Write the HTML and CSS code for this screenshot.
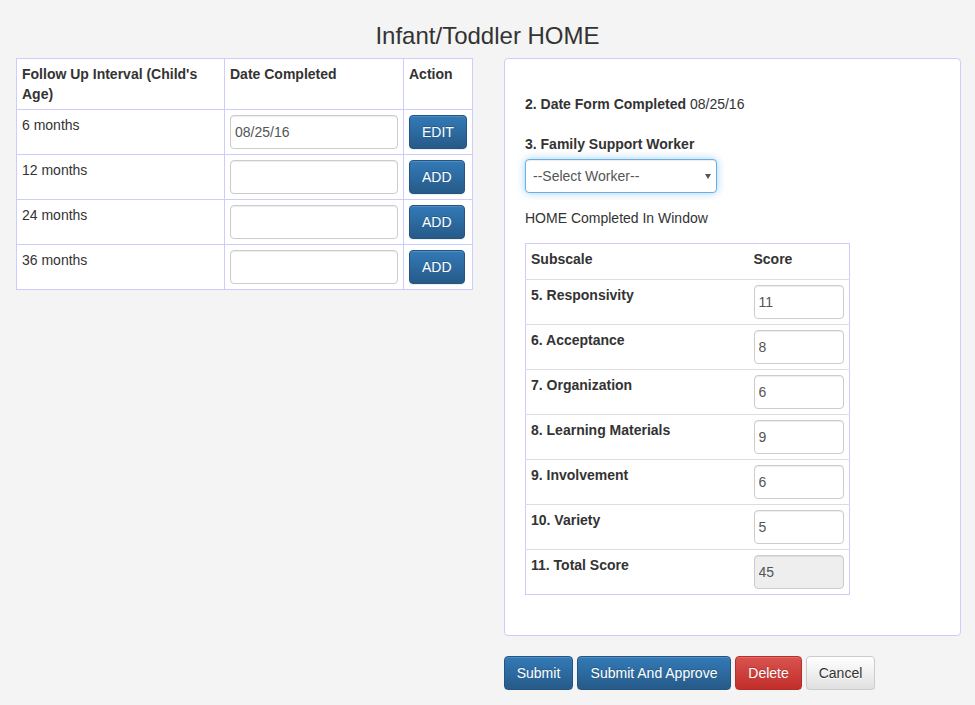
FILE: index.html
```html
<!DOCTYPE html>
<html>
<head>
<meta charset="utf-8">
<link rel="stylesheet" href="styles.css">
</head>
<body>
<h1 class="title">Infant/Toddler HOME</h1>
<div class="layout">
  <div class="col-left">
    <table class="followup">
      <colgroup><col class="c1"><col class="c2"><col class="c3"></colgroup>
      <thead>
        <tr><th>Follow Up Interval (Child's Age)</th><th>Date Completed</th><th>Action</th></tr>
      </thead>
      <tbody>
        <tr><td>6 months</td><td><input class="field date" type="text" value="08/25/16"></td><td><button class="btn btn-primary">EDIT</button></td></tr>
        <tr><td>12 months</td><td><input class="field date" type="text" value=""></td><td><button class="btn btn-primary">ADD</button></td></tr>
        <tr><td>24 months</td><td><input class="field date" type="text" value=""></td><td><button class="btn btn-primary">ADD</button></td></tr>
        <tr><td>36 months</td><td><input class="field date" type="text" value=""></td><td><button class="btn btn-primary">ADD</button></td></tr>
      </tbody>
    </table>
  </div>
  <div class="col-right">
    <div class="panel">
      <p class="line"><b>2. Date Form Completed</b> 08/25/16</p>
      <p class="label"><b>3. Family Support Worker</b></p>
      <div class="select-wrap">
        <select class="select"><option>--Select Worker--</option></select>
      </div>
      <p class="window">HOME Completed In Window</p>
      <table class="scores">
        <colgroup><col class="s1"><col class="s2"></colgroup>
        <thead><tr><th>Subscale</th><th>Score</th></tr></thead>
        <tbody>
          <tr><td>5. Responsivity</td><td><input class="field score" type="text" value="11"></td></tr>
          <tr><td>6. Acceptance</td><td><input class="field score" type="text" value="8"></td></tr>
          <tr><td>7. Organization</td><td><input class="field score" type="text" value="6"></td></tr>
          <tr><td>8. Learning Materials</td><td><input class="field score" type="text" value="9"></td></tr>
          <tr><td>9. Involvement</td><td><input class="field score" type="text" value="6"></td></tr>
          <tr><td>10. Variety</td><td><input class="field score" type="text" value="5"></td></tr>
          <tr><td>11. Total Score</td><td><input class="field score readonly" type="text" value="45" readonly></td></tr>
        </tbody>
      </table>
    </div>
    <div class="actions">
      <button class="btn btn-primary w-submit">Submit</button>
      <button class="btn btn-primary w-approve">Submit And Approve</button>
      <button class="btn btn-danger w-delete">Delete</button>
      <button class="btn btn-default w-cancel">Cancel</button>
    </div>
  </div>
</div>
</body>
</html>
```

FILE: styles.css
```css
* { box-sizing: border-box; }
html, body { margin: 0; padding: 0; }
body {
  background: #f4f4f4;
  font-family: "Liberation Sans", Arial, Helvetica, sans-serif;
  font-size: 14px;
  line-height: 20px;
  color: #333;
}
.title {
  margin: 22px 0 8px;
  font-size: 24px;
  line-height: 28px;
  font-weight: normal;
  text-align: center;
  color: #333;
}
.layout {
  display: grid;
  grid-template-columns: 457px 457px;
  column-gap: 31px;
  padding-left: 16px;
}
table { border-collapse: collapse; border-spacing: 0; }
.followup {
  width: 456px;
  table-layout: fixed;
  background: #fff;
}
.followup col.c1 { width: 208px; }
.followup col.c2 { width: 179px; }
.followup col.c3 { width: 69px; }
.followup th, .followup td {
  border: 1px solid #ccccff;
  padding: 5px;
  vertical-align: top;
  text-align: left;
}
.followup th { font-weight: bold; }
.field {
  display: block;
  height: 34px;
  padding: 6px 4px;
  font-family: inherit;
  font-size: 14px;
  line-height: 20px;
  color: #555;
  background: #fff;
  border: 1px solid #ccc;
  border-radius: 4px;
  box-shadow: inset 0 1px 1px rgba(0,0,0,.075);
  outline: none;
}
.field.date { width: 168px; }
.field.score { width: 90px; }
.field.readonly { background: #eee; }
.btn {
  display: inline-block;
  height: 34px;
  padding: 6px 12px;
  font-family: inherit;
  font-size: 14px;
  line-height: 20px;
  text-align: center;
  border: 1px solid transparent;
  border-radius: 4px;
  cursor: pointer;
  box-shadow: inset 0 1px 0 rgba(255,255,255,.15), 0 1px 1px rgba(0,0,0,.075);
  vertical-align: middle;
}
.w-submit, .w-approve, .w-delete, .w-cancel { padding-left: 0; padding-right: 0; }
.w-submit { width: 69px; }
.w-approve { width: 154px; }
.w-delete { width: 67px; }
.w-cancel { width: 69px; }
.btn-primary {
  color: #fff;
  background: linear-gradient(to bottom, #337ab7 0, #265a88 100%);
  border-color: #245580;
  text-shadow: 0 -1px 0 rgba(0,0,0,.2);
}
.btn-danger {
  color: #fff;
  background: linear-gradient(to bottom, #d9534f 0, #c12e2a 100%);
  border-color: #b92c28;
  text-shadow: 0 -1px 0 rgba(0,0,0,.2);
}
.btn-default {
  color: #333;
  background: linear-gradient(to bottom, #fff 0, #e0e0e0 100%);
  border-color: #ccc;
  text-shadow: 0 1px 0 #fff;
}
.panel {
  background: #fff;
  border: 1px solid #ccccff;
  border-radius: 4px;
  padding: 35px 20px 40px;
}
.panel p { margin: 0; }
.line { margin-bottom: 20px !important; }
.label { margin-bottom: 5px !important; }
.select-wrap {
  position: relative;
  width: 192px;
}
.select-wrap::after {
  content: "";
  position: absolute;
  right: 6px;
  top: 15px;
  border-left: 3.5px solid transparent;
  border-right: 3.5px solid transparent;
  border-top: 5px solid #555;
  pointer-events: none;
}
.select {
  -webkit-appearance: none;
  appearance: none;
  display: block;
  width: 192px;
  height: 34px;
  padding: 6px 7px;
  font-family: inherit;
  font-size: 14px;
  line-height: 20px;
  color: #555;
  background: #fff;
  border: 1px solid #66afe9;
  border-radius: 4px;
  box-shadow: inset 0 1px 1px rgba(0,0,0,.075), 0 0 8px rgba(102,175,233,.6);
  outline: none;
}
.window { margin: 15px 0 15px !important; }
.scores {
  width: 324px;
  table-layout: fixed;
  border: 1px solid #ccccff;
}
.scores col.s1 { width: 223px; }
.scores col.s2 { width: 101px; }
.scores th, .scores td {
  padding: 5px;
  text-align: left;
  vertical-align: top;
  font-weight: bold;
  border-top: 1px solid #ddd;
}
.scores th { padding: 5px 5px 10px; border-top: none; }
.actions {
  margin-top: 20px;
  font-size: 0;
  display: flex;
  gap: 4px;
}
```
